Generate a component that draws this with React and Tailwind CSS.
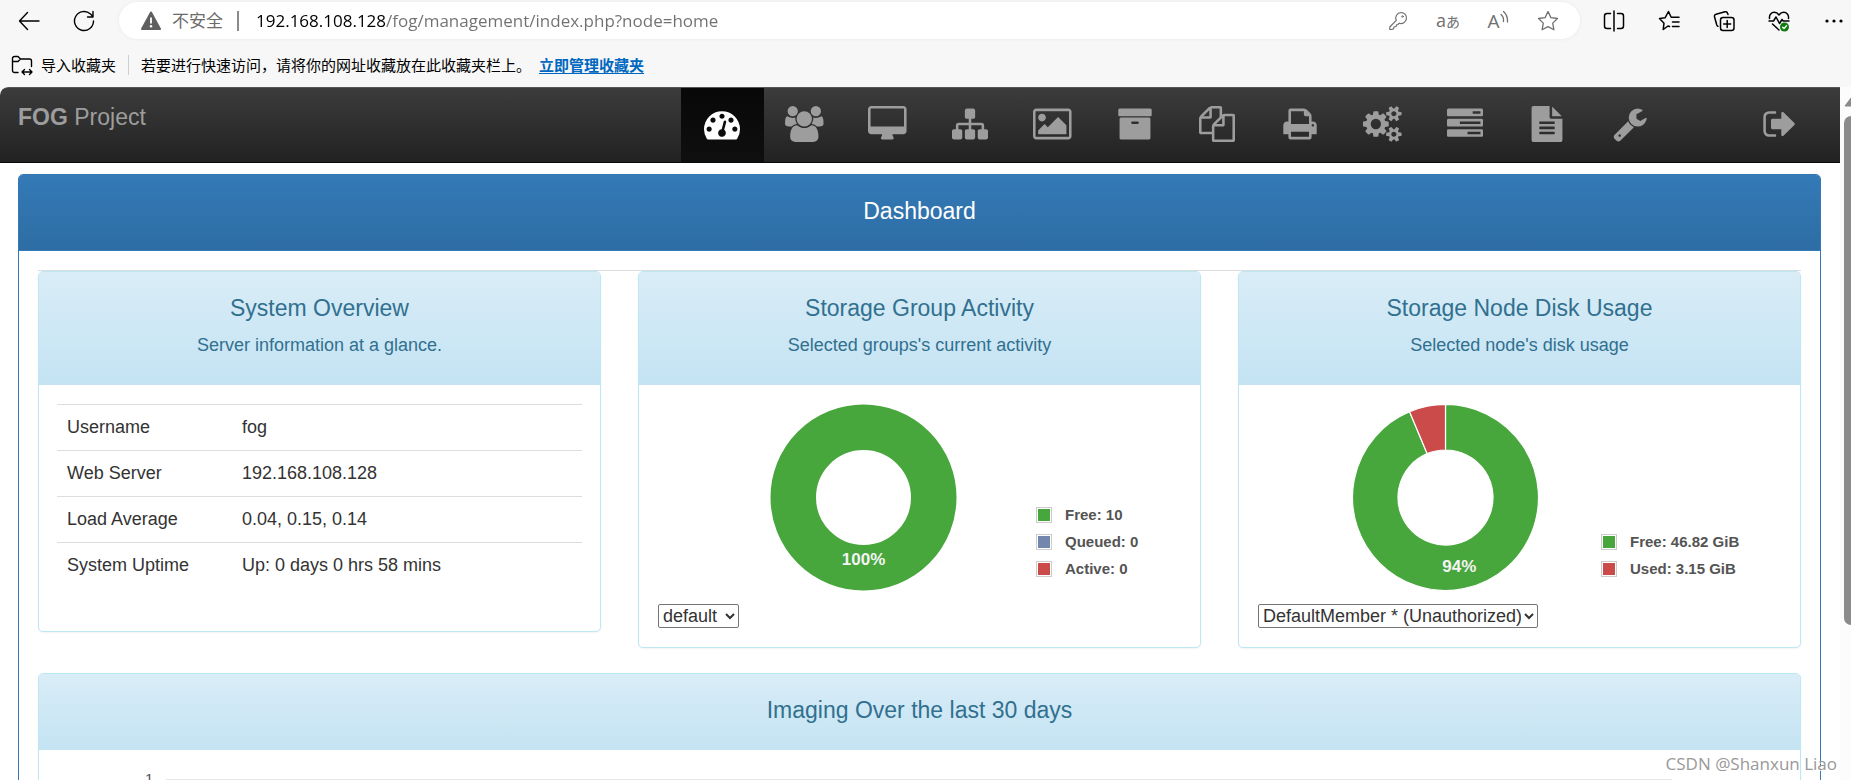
import { useState } from 'react';

const NAV_ITEMS = [
  {
    id: 'home',
    label: 'Dashboard',
    viewBox: '0 0 1792 1792',
    path: 'M384 1152q0-53-37.5-90.5t-90.5-37.5-90.5 37.5-37.5 90.5 37.5 90.5 90.5 37.5 90.5-37.5 37.5-90.5zm192-448q0-53-37.5-90.5t-90.5-37.5-90.5 37.5-37.5 90.5 37.5 90.5 90.5 37.5 90.5-37.5 37.5-90.5zm428 481l101-382q6-26-7.5-48.5t-38.5-29.5-48 6.5-30 39.5l-101 382q-60 5-107 43.5t-63 98.5q-20 77 20 146t117 89 146-20 89-117q16-60-6-117t-72-91zm660-33q0-53-37.5-90.5t-90.5-37.5-90.5 37.5-37.5 90.5 37.5 90.5 90.5 37.5 90.5-37.5 37.5-90.5zm-640-640q0-53-37.5-90.5t-90.5-37.5-90.5 37.5-37.5 90.5 37.5 90.5 90.5 37.5 90.5-37.5 37.5-90.5zm448 192q0-53-37.5-90.5t-90.5-37.5-90.5 37.5-37.5 90.5 37.5 90.5 90.5 37.5 90.5-37.5 37.5-90.5zm320 448q0 261-141 483-19 29-54 29h-1402q-35 0-54-29-141-221-141-483 0-182 71-348t191-286 286-191 348-71 348 71 286 191 191 286 71 348z',
  },
  {
    id: 'user',
    label: 'Users',
    viewBox: '-64 0 1920 1792',
    path: 'M529 896q-162 5-265 128h-134q-82 0-138-40.5t-56-118.5q0-353 124-353 6 0 43.5 21t97.5 42.5 119 21.5q67 0 133-23-5 37-5 66 0 139 81 256zm1071 637q0 120-73 189.5t-194 69.5h-874q-121 0-194-69.5t-73-189.5q0-53 3.5-103.5t14-109 26.5-108.5 43-97.5 62-81 85.5-53.5 111.5-20q10 0 43 21.5t73 48 107 48 135 21.5 135-21.5 107-48 73-48 43-21.5q61 0 111.5 20t85.5 53.5 62 81 43 97.5 26.5 108.5 14 109 3.5 103.5zm-1024-1277q0 106-75 181t-181 75-181-75-75-181 75-181 181-75 181 75 75 181zm704 384q0 159-112.5 271.5t-271.5 112.5-271.5-112.5-112.5-271.5 112.5-271.5 271.5-112.5 271.5 112.5 112.5 271.5zm576 225q0 78-56 118.5t-138 40.5h-134q-103-123-265-128 81-117 81-256 0-29-5-66 66 23 133 23 59 0 119-21.5t97.5-42.5 43.5-21q124 0 124 353zm-128-609q0 106-75 181t-181 75-181-75-75-181 75-181 181-75 181 75 75 181z',
  },
  {
    id: 'host',
    label: 'Hosts',
    viewBox: '-64 0 1920 1792',
    path: 'M1728 992v-832q0-13-9.5-22.5t-22.5-9.5h-1600q-13 0-22.5 9.5t-9.5 22.5v832q0 13 9.5 22.5t22.5 9.5h1600q13 0 22.5-9.5t9.5-22.5zm128-832v1088q0 66-47 113t-113 47h-544q0 37 16 77.5t32 71 16 43.5q0 26-19 45t-45 19h-512q-26 0-45-19t-19-45q0-14 16-44t32-70 16-78h-544q-66 0-113-47t-47-113v-1088q0-66 47-113t113-47h1600q66 0 113 47t47 113z',
  },
  {
    id: 'group',
    label: 'Groups',
    viewBox: '0 0 1792 1792',
    path: 'M1792 1248v320q0 40-28 68t-68 28h-320q-40 0-68-28t-28-68v-320q0-40 28-68t68-28h96v-192h-512v192h96q40 0 68 28t28 68v320q0 40-28 68t-68 28h-320q-40 0-68-28t-28-68v-320q0-40 28-68t68-28h96v-192h-512v192h96q40 0 68 28t28 68v320q0 40-28 68t-68 28h-320q-40 0-68-28t-28-68v-320q0-40 28-68t68-28h96v-192q0-52 38-90t90-38h512v-192h-96q-40 0-68-28t-28-68v-320q0-40 28-68t68-28h320q40 0 68 28t28 68v320q0 40-28 68t-68 28h-96v192h512q52 0 90 38t38 90v192h96q40 0 68 28t28 68z',
  },
  {
    id: 'image',
    label: 'Images',
    viewBox: '-64 0 1920 1792',
    path: 'M576 576q0 80-56 136t-136 56-136-56-56-136 56-136 136-56 136 56 56 136zm1024 384v448h-1408v-192l320-320 160 160 512-512zm96-704h-1600q-13 0-22.5 9.5t-9.5 22.5v1216q0 13 9.5 22.5t22.5 9.5h1600q13 0 22.5-9.5t9.5-22.5v-1216q0-13-9.5-22.5t-22.5-9.5zm160 32v1216q0 66-47 113t-113 47h-1600q-66 0-113-47t-47-113v-1216q0-66 47-113t113-47h1600q66 0 113 47t47 113z',
  },
  {
    id: 'storage',
    label: 'Storage',
    viewBox: '0 0 1792 1792',
    path: 'M1088 832q0-26-19-45t-45-19h-256q-26 0-45 19t-19 45 19 45 45 19h256q26 0 45-19t19-45zm576-192v960q0 26-19 45t-45 19h-1408q-26 0-45-19t-19-45v-960q0-26 19-45t45-19h1408q26 0 45 19t19 45zm64-448v256q0 26-19 45t-45 19h-1536q-26 0-45-19t-19-45v-256q0-26 19-45t45-19h1536q26 0 45 19t19 45z',
  },
  {
    id: 'snapin',
    label: 'Snapins',
    viewBox: '0 0 1792 1792',
    path: 'M1696 384q40 0 68 28t28 68v1216q0 40-28 68t-68 28h-960q-40 0-68-28t-28-68v-288h-544q-40 0-68-28t-28-68v-672q0-40 20-88t48-76l408-408q28-28 76-48t88-20h416q40 0 68 28t28 68v328q68-40 128-40h416zm-544 213l-299 299h299v-299zm-640-384l-299 299h299v-299zm196 647l316-316v-416h-384v416q0 40-28 68t-68 28h-416v640h512v-256q0-40 20-88t48-76zm956 804v-1152h-384v416q0 40-28 68t-68 28h-416v640h896z',
  },
  {
    id: 'printer',
    label: 'Printers',
    viewBox: '0 0 1792 1792',
    path: 'M448 1536h896v-256h-896v256zm0-640h896v-384h-160q-40 0-68-28t-28-68v-160h-640v640zm1152 64q0-26-19-45t-45-19-45 19-19 45 19 45 45 19 45-19 19-45zm128 0v416q0 13-9.5 22.5t-22.5 9.5h-224v160q0 40-28 68t-68 28h-960q-40 0-68-28t-28-68v-160h-224q-13 0-22.5-9.5t-9.5-22.5v-416q0-79 56.5-135.5t135.5-56.5h64v-544q0-40 28-68t68-28h672q40 0 88 20t76 48l152 152q28 28 48 76t20 88v256h64q79 0 135.5 56.5t56.5 135.5z',
  },
  {
    id: 'service',
    label: 'Client Settings',
    viewBox: '-64 0 1920 1792',
    path: 'M832 896q0-106-75-181t-181-75-181 75-75 181 75 181 181 75 181-75 75-181zm768 512q0-52-38-90t-90-38-90 38-38 90q0 53 37.5 90.5t90.5 37.5 90.5-37.5 37.5-90.5zm0-1024q0-52-38-90t-90-38-90 38-38 90q0 53 37.5 90.5t90.5 37.5 90.5-37.5 37.5-90.5zm-384 421v185q0 10-7 19.5t-16 10.5l-155 24q-11 35-32 76 34 48 90 115 7 11 7 20 0 12-7 19-23 30-82.5 89.5t-78.5 59.5q-11 0-21-7l-115-90q-37 19-77 31-11 108-23 155-7 24-30 24h-186q-11 0-20-7.5t-10-17.5l-23-153q-34-10-75-31l-118 89q-7 7-20 7-11 0-21-8-144-133-144-160 0-9 7-19 10-14 41-53t47-61q-23-44-35-82l-152-24q-10-1-17-9.5t-7-19.5v-185q0-10 7-19.5t16-10.5l155-24q11-35 32-76-34-48-90-115-7-11-7-20 0-12 7-20 22-30 82-89t79-59q11 0 21 7l115 90q34-18 77-32 11-108 23-154 7-24 30-24h186q11 0 20 7.5t10 17.5l23 153q34 10 75 31l118-89q8-7 20-7 11 0 21 8 144 133 144 160 0 8-7 19-12 16-42 54t-45 60q23 48 34 82l152 23q10 2 17 10.5t7 19.5zm640 533v140q0 16-149 31-12 27-30 52 51 113 51 138 0 4-4 7-122 71-124 71-8 0-46-47t-52-68q-20 2-30 2t-30-2q-14 21-52 68t-46 47q-2 0-124-71-4-3-4-7 0-25 51-138-18-25-30-52-149-15-149-31v-140q0-16 149-31 13-29 30-52-51-113-51-138 0-4 4-7 4-2 35-20t59-34 30-16q8 0 46 46.5t52 67.5q20-2 30-2t30 2q51-71 92-112l6-2q4 0 124 70 4 3 4 7 0 25-51 138 17 23 30 52 149 15 149 31zm0-1024v140q0 16-149 31-12 27-30 52 51 113 51 138 0 4-4 7-122 71-124 71-8 0-46-47t-52-68q-20 2-30 2t-30-2q-14 21-52 68t-46 47q-2 0-124-71-4-3-4-7 0-25 51-138-18-25-30-52-149-15-149-31v-140q0-16 149-31 13-29 30-52-51-113-51-138 0-4 4-7 4-2 35-20t59-34 30-16q8 0 46 46.5t52 67.5q20-2 30-2t30 2q51-71 92-112l6-2q4 0 124 70 4 3 4 7 0 25-51 138 17 23 30 52 149 15 149 31z',
  },
  {
    id: 'task',
    label: 'Tasks',
    viewBox: '0 0 1792 1792',
    path: 'M1024 1408h640v-128h-640v128zm-384-512h1024v-128h-1024v128zm640-512h384v-128h-384v128zm512 832v256q0 26-19 45t-45 19h-1664q-26 0-45-19t-19-45v-256q0-26 19-45t45-19h1664q26 0 45 19t19 45zm0-512v256q0 26-19 45t-45 19h-1664q-26 0-45-19t-19-45v-256q0-26 19-45t45-19h1664q26 0 45 19t19 45zm0-512v256q0 26-19 45t-45 19h-1664q-26 0-45-19t-19-45v-256q0-26 19-45t45-19h1664q26 0 45 19t19 45z',
  },
  {
    id: 'report',
    label: 'Reports',
    viewBox: '0 0 1792 1792',
    path: 'M1596 476q14 14 28 36h-472v-472q22 14 36 28zm-476 164h544v1056q0 40-28 68t-68 28h-1344q-40 0-68-28t-28-68v-1600q0-40 28-68t68-28h800v544q0 40 28 68t68 28zm160 736v-64q0-14-9-23t-23-9h-704q-14 0-23 9t-9 23v64q0 14 9 23t23 9h704q14 0 23-9t9-23zm0-256v-64q0-14-9-23t-23-9h-704q-14 0-23 9t-9 23v64q0 14 9 23t23 9h704q14 0 23-9t9-23zm0-256v-64q0-14-9-23t-23-9h-704q-14 0-23 9t-9 23v64q0 14 9 23t23 9h704q14 0 23-9t9-23z',
  },
  {
    id: 'about',
    label: 'FOG Configuration',
    viewBox: '0 0 1792 1792',
    path: 'M448 1472q0-26-19-45t-45-19-45 19-19 45 19 45 45 19 45-19 19-45zm644-420l-682 682q-37 37-90 37-52 0-91-37l-106-108q-38-36-38-90 0-53 38-91l681-681q39 98 114.5 173.5t173.5 114.5zm634-435q0 39-23 106-47 134-164.5 217.5t-258.5 83.5q-185 0-316.5-131.5t-131.5-316.5 131.5-316.5 316.5-131.5q58 0 121.5 16.5t107.5 46.5q16 11 16 28t-16 28l-293 169v224l193 107q5-3 79-48.5t135.5-81 70.5-35.5q15 0 23.5 10t8.5 25z',
  },
];

const LOGOUT = {
  id: 'logout',
  label: 'Logout',
  viewBox: '0 0 1664 1792',
  path: 'M704 1440q0 4 1 20t.5 26.5-3 23.5-10 19.5-20.5 6.5h-320q-119 0-203.5-84.5t-84.5-203.5v-704q0-119 84.5-203.5t203.5-84.5h320q13 0 22.5 9.5t9.5 22.5q0 4 1 20t.5 26.5-3 23.5-10 19.5-20.5 6.5h-320q-66 0-113 47t-47 113v704q0 66 47 113t113 47h312l11.5 1 11.5 3 8 5.5 7 9 2 13.5zm928-544q0 26-19 45l-544 544q-19 19-45 19t-45-19-19-45v-288h-448q-26 0-45-19t-19-45v-384q0-26 19-45t45-19h448v-288q0-26 19-45t45-19 45 19l544 544q19 19 19 45z',
};

const SYSTEM_INFO = [
  ['Username', 'fog'],
  ['Web Server', '192.168.108.128'],
  ['Load Average', '0.04, 0.15, 0.14'],
  ['System Uptime', 'Up: 0 days 0 hrs 58 mins'],
];

const GROUP_ACTIVITY = [
  { name: 'Free', value: 10, text: 'Free: 10', color: '#47a63c' },
  { name: 'Queued', value: 0, text: 'Queued: 0', color: '#7386ad' },
  { name: 'Active', value: 0, text: 'Active: 0', color: '#cb4b4b' },
];

const DISK_USAGE = [
  { name: 'Free', value: 46.82, text: 'Free: 46.82 GiB', color: '#47a63c' },
  { name: 'Used', value: 3.15, text: 'Used: 3.15 GiB', color: '#cb4b4b' },
];

const LineIcon = ({ className = 'size-[22px]', children }) => (
  <svg
    viewBox="0 0 22 22"
    className={className}
    fill="none"
    stroke="currentColor"
    strokeWidth="1.5"
    strokeLinecap="round"
    strokeLinejoin="round"
    aria-hidden="true"
  >
    {children}
  </svg>
);

const ToolButton = ({ label, children }) => (
  <button type="button" aria-label={label} className="flex h-8 w-[22px] items-center justify-center">
    {children}
  </button>
);

const AddressBar = () => (
  <div className="flex h-[37px] min-w-0 flex-1 items-center rounded-full bg-white px-[21px] shadow-[0_0_4px_rgba(0,0,0,0.06)]">
    <svg viewBox="0 0 22 20" className="h-5 w-[22px]" aria-hidden="true">
      <path d="M11 1.500 20 18H2Z" fill="#5f5f5f" stroke="#5f5f5f" strokeWidth="2" strokeLinejoin="round" />
      <path d="M11 6.500v6" stroke="#fff" strokeWidth="1.800" />
      <circle cx="11" cy="15.300" r="1.200" fill="#fff" />
    </svg>
    <span className="ml-[10px] text-[17px] leading-6 text-[#6b6b6b]">不安全</span>
    <span className="ml-[14px] h-5 w-0.5 bg-[#8a8a8a]" />
    {/* host part is darker than the rest of the address */}
    <input
      type="text"
      aria-label="Address"
      defaultValue="192.168.108.128/fog/management/index.php?node=home"
      className="ml-[17px] h-7 min-w-0 flex-1 bg-linear-to-r from-black from-[130px] to-[#707070] to-[130px] bg-clip-text text-[17px] text-transparent outline-none"
    />
    <div className="flex items-center gap-7 text-[#707070]">
      <ToolButton label="Passwords">
        <LineIcon>
          <path d="M14 2.500a5.500 5.500 0 1 1-1.800 10.700L11 14.500 9.500 14.800 9 16.500 7 17l-.500 1.800-1.500.700H2.800V17l6.500-6.600A5.500 5.500 0 0 1 14 2.500z" strokeWidth="1.200" />
          <circle cx="15.500" cy="6.500" r=".8" strokeWidth="1" />
        </LineIcon>
      </ToolButton>
      <button type="button" aria-label="Translate" className="flex w-[22px] items-baseline justify-center leading-8">
        <span className="text-[18px]">a</span>
        <span className="text-[14px]">あ</span>
      </button>
      <button type="button" aria-label="Read aloud" className="flex w-[22px] items-center justify-center leading-8">
        <span className="text-[19px]">A</span>
        <svg viewBox="0 0 9 22" className="h-[22px] w-[9px]" fill="none" stroke="currentColor" strokeWidth="1.300" strokeLinecap="round" aria-hidden="true">
          <path d="M1 4.500q3 2.500 2.500 7M3.500 1.500q4.500 4 4 10.500" />
        </svg>
      </button>
      <ToolButton label="Add to favorites">
        <LineIcon>
          <path d="M11 1.500l2.900 6.100 6.600.900-4.800 4.600 1.200 6.700L11 16.600l-5.900 3.200 1.200-6.700L1.500 8.500l6.600-.900z" strokeWidth="1.300" />
        </LineIcon>
      </ToolButton>
    </div>
  </div>
);

const BrowserToolbar = () => (
  <header className="shrink-0 bg-[#f7f7f7] font-['Open_Sans','Noto_Sans_CJK_SC',sans-serif] text-black">
    <div className="flex h-[41px] items-center pr-[6px] pl-[18px]">
      <ToolButton label="Back">
        <LineIcon>
          <path d="M21 11H1.500M9.500 2.500 1.500 11l8 8.500" strokeWidth="1.400" />
        </LineIcon>
      </ToolButton>
      <div className="mr-6 ml-[33px] flex">
        <ToolButton label="Refresh">
          <LineIcon>
            <path d="M20.500 11a9.500 9.500 0 1 1-3-6.900L19.500 6M20 1.500V7h-5.500" strokeWidth="1.400" />
          </LineIcon>
        </ToolButton>
      </div>
      <AddressBar />
      <div className="ml-[23px] flex items-center gap-[33px]">
        <ToolButton label="Split screen">
          <LineIcon>
            <path d="M11 1v20M7.500 3.500H4A2.500 2.500 0 0 0 1.500 6v10A2.500 2.500 0 0 0 4 18.500h3.500M14.500 3.500H18A2.500 2.500 0 0 1 20.500 6v10a2.500 2.500 0 0 1-2.500 2.500h-3.500" />
          </LineIcon>
        </ToolButton>
        <ToolButton label="Favorites">
          <LineIcon>
            <path d="M14 7.200h7M14.500 12H21M14.500 16.500H21M11.500 16.500 10 16l-4.800 3.500.800-6.300L1.500 8.500l5.700-.800L10.500 1.500l2.700 5.700" />
          </LineIcon>
        </ToolButton>
        <ToolButton label="Collections">
          <LineIcon>
            <rect x="7.500" y="7.500" width="13.500" height="13" rx="2.500" />
            <path d="M14.200 10.500v7M10.700 14h7M15 4.500l-.500-1.200A2 2 0 0 0 12 1.800L3 4.200a2 2 0 0 0-1.500 2.500l2.200 8a3 3 0 0 0 1.300 1.600" />
          </LineIcon>
        </ToolButton>
        <ToolButton label="Browser essentials">
          <LineIcon>
            <path d="M1.500 8.500C1 4.500 3.500 2.300 6.300 2.300c2 0 3.500 1 4.700 2.700 1.200-1.700 2.700-2.700 4.700-2.700 2.800 0 5.300 2.200 4.800 6.200M1 11h4.500L8 7l3.500 6.500 2.500-4 1.200 1.500H21M4.500 14l6.500 6" />
            <circle cx="16.500" cy="17" r="4.500" fill="#107c10" stroke="none" />
            <path d="M14.600 17.200l1.400 1.300 2.500-2.700" stroke="#fff" strokeWidth="1.300" />
          </LineIcon>
        </ToolButton>
        <ToolButton label="Settings and more">
          <svg viewBox="0 0 22 22" className="size-[22px]" fill="currentColor" aria-hidden="true">
            <circle cx="4" cy="11" r="1.600" />
            <circle cx="11" cy="11" r="1.600" />
            <circle cx="18" cy="11" r="1.600" />
          </svg>
        </ToolButton>
      </div>
    </div>
    <div className="flex h-[46px] items-center pt-px pl-[11px] text-[15px] leading-6">
      <LineIcon>
        <path d="M7 18.500H3.500a2 2 0 0 1-2-2V4.500a2 2 0 0 1 2-2H7l2.500 2.500h9a2 2 0 0 1 2 2v5.500M1.500 7.500H7L9.500 5M11 18h10M13.500 15.500 11 18l2.500 2.500M18.500 15.500 21 18l-2.500 2.500" strokeWidth="1.400" />
      </LineIcon>
      <button type="button" className="ml-2">
        导入收藏夹
      </button>
      <span className="mx-3 h-5 w-px bg-[#cfcfcf]" />
      <span>若要进行快速访问，请将你的网址收藏放在此收藏夹栏上。</span>
      <a href="#favorites" className="ml-2 font-semibold text-[#0067c0] underline underline-offset-2">
        立即管理收藏夹
      </a>
    </div>
  </header>
);

const NavLink = ({ item, active, onSelect }) => (
  <a
    href={`#${item.id}`}
    aria-label={item.label}
    onClick={() => onSelect?.(item.id)}
    className={`flex h-full items-center justify-center pb-[3px] ${
      active ? 'bg-linear-to-b from-[#080808] to-[#0f0f0f] text-white' : 'text-[#9d9d9d]'
    }`}
  >
    <svg viewBox={item.viewBox} className="h-9 w-auto" fill="currentColor" aria-hidden="true">
      <path d={item.path} />
    </svg>
  </a>
);

const Navbar = () => {
  const [active, setActive] = useState('home');

  return (
    <nav className="flex h-[76px] justify-between rounded-tl-lg border-t border-b border-t-[#555] border-b-[#080808] bg-linear-to-b from-[#3c3c3c] to-[#222] pr-5 pl-[18px]">
      <a href="#home" className="pt-[17px] text-[23px] leading-[25px] text-[#9d9d9d]">
        <b>FOG</b> Project
      </a>
      <div className="flex gap-[67px]">
        <div className="grid w-[990px] grid-cols-12">
          {NAV_ITEMS.map((item) => (
            <NavLink key={item.id} item={item} active={item.id === active} onSelect={setActive} />
          ))}
        </div>
        <div className="w-[82px]">
          <NavLink item={LOGOUT} />
        </div>
      </div>
    </nav>
  );
};

const Panel = ({ title, subtitle, children }) => (
  <section className="rounded-[5px] border border-[#bce8f1] bg-white shadow-[0_1px_2px_rgba(0,0,0,0.05)]">
    <div className="rounded-t-[4px] bg-linear-to-b from-[#d9edf7] to-[#c4e3f3] pt-6 pb-[27px] text-center text-[#31708f]">
      <h4 className="text-[23px] leading-[25px]">{title}</h4>
      {subtitle && <p className="mt-3 leading-[25px]">{subtitle}</p>}
    </div>
    {children}
  </section>
);

const point = (fraction, radius) => {
  const angle = fraction * 2 * Math.PI;
  return [93.5 + radius * Math.sin(angle), 93.5 - radius * Math.cos(angle)];
};

const slicePath = (start, end) => {
  const large = end - start > 0.5 ? 1 : 0;
  const [x1, y1] = point(start, 93);
  const [x2, y2] = point(end, 93);
  const [x3, y3] = point(end, 47.5);
  const [x4, y4] = point(start, 47.5);
  return `M${x1} ${y1}A93 93 0 ${large} 1 ${x2} ${y2}L${x3} ${y3}A47.5 47.5 0 ${large} 0 ${x4} ${y4}Z`;
};

const Donut = ({ data, labelRadius }) => {
  const total = data.reduce((sum, d) => sum + d.value, 0);
  const main = data[0].value / total;
  const [labelX, labelY] = point(main / 2, labelRadius);
  const slices = [];
  let start = 0;
  data.forEach((d) => {
    const end = start + d.value / total;
    if (d.value > 0) slices.push({ ...d, start, end });
    start = end;
  });

  return (
    <svg viewBox="0 0 187 187" className="size-[187px]">
      {slices.length === 1 ? (
        <circle cx="93.5" cy="93.5" r="70.25" fill="none" stroke={slices[0].color} strokeWidth="45.5" />
      ) : (
        slices.map((s) => (
          <path key={s.name} d={slicePath(s.start, s.end)} fill={s.color} stroke="#fff" strokeWidth="1.2" />
        ))
      )}
      <text x={labelX} y={labelY + 6} textAnchor="middle" className="fill-[#f4f4f4] text-[17px] font-bold">
        {Math.round(main * 100)}%
      </text>
    </svg>
  );
};

const Legend = ({ data }) => (
  <ul className="mb-[9px] text-[15px] font-bold text-[#545454]">
    {data.map((d) => (
      <li key={d.name} className="flex h-[27px] items-center gap-[13px]">
        <span className="size-4 border border-[#ccc] p-px">
          <span className="block size-full" style={{ backgroundColor: d.color }} />
        </span>
        {d.text}
      </li>
    ))}
  </ul>
);

const SelectBox = ({ label, option, className }) => (
  <select
    aria-label={label}
    className={`mt-[13px] block h-6 rounded-[2px] border border-[#767676] bg-white ${className}`}
  >
    <option>{option}</option>
  </select>
);

const Dashboard = () => (
  <main className="pt-[11px] pr-[19px] pl-[18px]">
    <section className="rounded-[5px] border border-[#337ab7]">
      <div className="rounded-t-[4px] border-b border-[#337ab7] bg-linear-to-b from-[#337ab7] to-[#2e6da4] pt-6 pb-[26px] text-center text-white">
        <h4 className="text-[23px] leading-[25px]">Dashboard</h4>
      </div>
      <div className="px-[19px] pt-[19px]">
        <div className="grid grid-cols-3 items-start gap-x-[37px] border-t border-[#ddd]">
          <Panel title="System Overview" subtitle="Server information at a glance.">
            <div className="px-[18px] pt-[19px] pb-[43px]">
              <table className="w-full">
                <tbody>
                  {SYSTEM_INFO.map(([name, value]) => (
                    <tr key={name} className="border-t border-[#ddd]">
                      <th className="w-1/3 px-[10px] py-[10px] text-left leading-[25px] font-normal">{name}</th>
                      <td className="px-[10px] py-[10px] leading-[25px]">{value}</td>
                    </tr>
                  ))}
                </tbody>
              </table>
            </div>
          </Panel>

          <Panel title="Storage Group Activity" subtitle="Selected groups's current activity">
            <div className="px-[19px] py-[19px]">
              <div className="flex items-end gap-[79px] pl-28">
                <Donut data={GROUP_ACTIVITY} labelRadius={61} />
                <Legend data={GROUP_ACTIVITY} />
              </div>
              <SelectBox label="Storage group" option="default" className="w-[81px]" />
            </div>
          </Panel>

          <Panel title="Storage Node Disk Usage" subtitle="Selected node's disk usage">
            <div className="px-[19px] py-[19px]">
              <div className="flex items-end gap-[62px] pl-[94px]">
                <Donut data={DISK_USAGE} labelRadius={70} />
                <Legend data={DISK_USAGE} />
              </div>
              <SelectBox
                label="Storage node"
                option="DefaultMember * (Unauthorized)"
                className="w-[280px]"
              />
            </div>
          </Panel>
        </div>

        <div className="mt-[25px]">
          <Panel title="Imaging Over the last 30 days">
            <div className="h-[300px] px-[106px] pt-5">
              <div className="flex items-center gap-[13px] text-[15px] leading-[18px] text-[#545454]">
                <span>1</span>
                <span className="mr-[22px] h-px flex-1 bg-[#e6e6e6]" />
              </div>
            </div>
          </Panel>
        </div>
      </div>
    </section>
  </main>
);

const Scrollbar = () => (
  <div className="flex w-[11px] shrink-0 flex-col overflow-hidden bg-[#fcfcfc] pl-1">
    <svg viewBox="0 0 14 10" className="mt-[10px] h-[10px] w-[14px]" aria-hidden="true">
      <path d="M7 1 13 9H1Z" fill="#8b8b8b" stroke="#8b8b8b" strokeLinejoin="round" />
    </svg>
    <div className="mt-[9px] h-[509px] w-[14px] rounded-full bg-[#8b8b8b]" />
  </div>
);

const App = () => (
  <div className="relative flex h-screen flex-col overflow-hidden bg-[#f7f7f7]">
    <BrowserToolbar />
    <div className="flex min-h-0 flex-1">
      <div className="min-w-0 flex-1 overflow-hidden rounded-tl-lg bg-white font-['Liberation_Sans',Arial,sans-serif] text-lg text-[#333]">
        <Navbar />
        <Dashboard />
      </div>
      <Scrollbar />
    </div>
    <span className="absolute right-[14px] bottom-1 font-['Open_Sans',sans-serif] text-[17px] leading-6 text-[#999] [text-shadow:1px_1px_0_#fff]">
      CSDN @Shanxun Liao
    </span>
  </div>
);

export default App;
